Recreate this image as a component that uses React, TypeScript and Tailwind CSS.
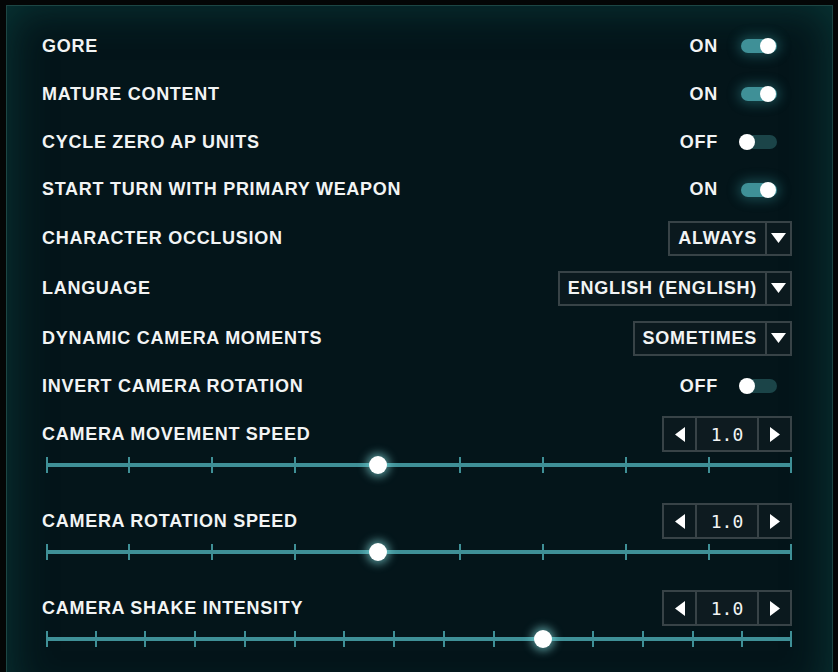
import React from "react";

const FONT = { fontFamily: '"Liberation Sans", Arial, sans-serif' };

function Toggle({ on }: { on: boolean }) {
  return (
    <div className="flex items-center">
      <span className="w-[60px] text-right text-[18px] font-bold tracking-[0.04em] text-[#f2f4f4]">
        {on ? "ON" : "OFF"}
      </span>
      <div className="ml-[23px] mr-[13px] flex h-[16px] w-[38px] items-center">
        {on ? (
          <div className="relative h-[14px] w-[36px] rounded-full bg-[#3f9097] shadow-[0_0_12px_3px_rgba(60,170,175,0.35)]">
            <div className="absolute right-[1px] top-[-1px] h-[16px] w-[16px] rounded-full bg-white" />
          </div>
        ) : (
          <div className="relative h-[14px] w-[36px] rounded-full bg-[#1b4448]">
            <div className="absolute left-[-2px] top-[-1px] h-[16px] w-[16px] rounded-full bg-white" />
          </div>
        )}
      </div>
    </div>
  );
}

function Dropdown({ value }: { value: string }) {
  return (
    <div className="flex h-[35px] border-2 border-[#384347] bg-[#0b191e]">
      <div className="flex items-center px-[8px] text-[18px] font-bold tracking-[0.04em] text-[#f2f4f4]">{value}</div>
      <div className="flex w-[25px] items-center justify-center border-l-2 border-[#384347]">
        <svg width="15" height="10" viewBox="0 0 15 10">
          <polygon points="0,0 15,0 7.5,10" fill="#ffffff" />
        </svg>
      </div>
    </div>
  );
}

function Stepper() {
  return (
    <div className="flex h-[36px] w-[130px] border-2 border-[#384347] bg-[#0b191e]">
      <div className="flex w-[31px] items-center justify-center">
        <svg width="10" height="15" viewBox="0 0 10 15">
          <polygon points="10,0 10,15 0,7.5" fill="#ffffff" />
        </svg>
      </div>
      <div
        className="flex flex-1 items-center justify-center border-x-2 border-[#384347] bg-[#0e1b20] text-[18px] text-[#f2f4f4]"
        style={{ fontFamily: '"DejaVu Sans Mono", monospace' }}
      >
        1.0
      </div>
      <div className="flex w-[31px] items-center justify-center">
        <svg width="10" height="15" viewBox="0 0 10 15">
          <polygon points="0,0 10,7.5 0,15" fill="#ffffff" />
        </svg>
      </div>
    </div>
  );
}

function Slider({ ticks, knob }: { ticks: number; knob: number }) {
  const items = Array.from({ length: ticks }, (_, i) => i);
  return (
    <div className="relative ml-[4px] h-[26px]">
      <div className="absolute left-0 right-0 top-[11px] h-[4px] bg-[#3f9097]" />
      {items.map((i) => (
        <div
          key={i}
          className="absolute top-[5px] h-[16px] w-[2px] bg-[#3f9097]"
          style={{ left: `calc(${(i / (ticks - 1)) * 100}% - ${i === ticks - 1 ? 2 : i === 0 ? 0 : 1}px)` }}
        />
      ))}
      <div
        className="absolute top-[4px] h-[18px] w-[18px] rounded-full bg-white shadow-[0_0_8px_3px_rgba(140,235,235,0.55)]"
        style={{ left: `calc(${(knob / (ticks - 1)) * 100}% - 9px)` }}
      />
    </div>
  );
}

function Row({ label, h, children }: { label: string; h: string; children: React.ReactNode }) {
  return (
    <div className={`flex items-center justify-between ${h}`}>
      <span className="text-[18px] font-bold tracking-[0.04em] text-[#f2f4f4]">{label}</span>
      {children}
    </div>
  );
}

function SliderGroup({ label, ticks, knob, mt }: { label: string; ticks: number; knob: number; mt: string }) {
  return (
    <div className={mt}>
      <div className="flex h-[36px] items-center justify-between">
        <span className="text-[18px] font-bold tracking-[0.04em] text-[#f2f4f4]">{label}</span>
        <Stepper />
      </div>
      <Slider ticks={ticks} knob={knob} />
    </div>
  );
}

export default function App() {
  return (
    <div className="h-[672px] w-[838px] overflow-hidden bg-[#040606] pl-[6px] pr-[5px] pt-[5px]" style={FONT}>
      <div className="h-[700px] border border-b-0 border-[#1d4644] bg-[#04151a] pl-[35px] pr-[40px] pt-[16px] shadow-[inset_0_0_45px_rgba(12,85,80,0.55)]">
        <Row label="GORE" h="h-[48px]"><Toggle on /></Row>
        <Row label="MATURE CONTENT" h="h-[48px]"><Toggle on /></Row>
        <Row label="CYCLE ZERO AP UNITS" h="h-[48px]"><Toggle on={false} /></Row>
        <Row label="START TURN WITH PRIMARY WEAPON" h="h-[47px]"><Toggle on /></Row>
        <Row label="CHARACTER OCCLUSION" h="h-[50px]"><Dropdown value="ALWAYS" /></Row>
        <Row label="LANGUAGE" h="h-[50px]"><Dropdown value="ENGLISH (ENGLISH)" /></Row>
        <Row label="DYNAMIC CAMERA MOMENTS" h="h-[50px]"><Dropdown value="SOMETIMES" /></Row>
        <Row label="INVERT CAMERA ROTATION" h="h-[46px]"><Toggle on={false} /></Row>
        <SliderGroup label="CAMERA MOVEMENT SPEED" ticks={10} knob={4} mt="mt-[7px]" />
        <SliderGroup label="CAMERA ROTATION SPEED" ticks={10} knob={4} mt="mt-[25px]" />
        <SliderGroup label="CAMERA SHAKE INTENSITY" ticks={16} knob={10} mt="mt-[25px]" />
      </div>
    </div>
  );
}
